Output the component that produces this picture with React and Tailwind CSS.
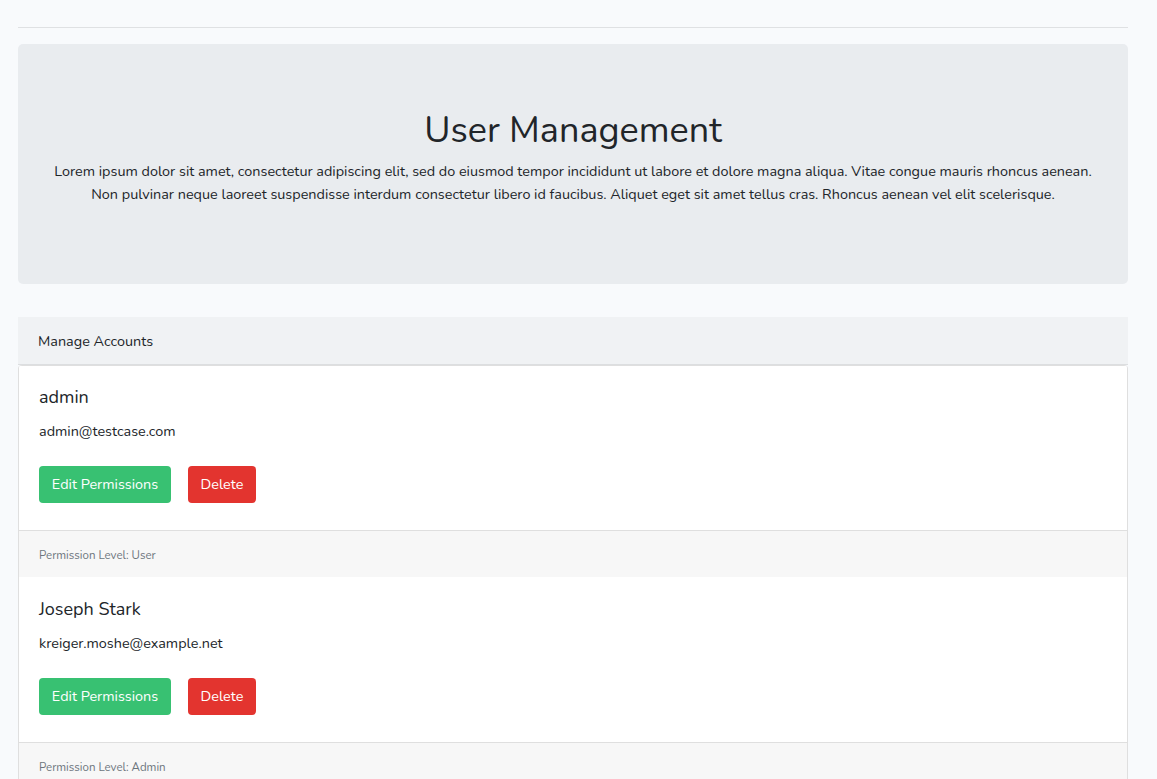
const users = [
  { name: "admin", email: "admin@testcase.com", level: "User" },
  { name: "Joseph Stark", email: "kreiger.moshe@example.net", level: "Admin" },
];

function UserCard({ user, first }) {
  return (
    <div className={first ? "border-t border-[#dfdfdf]" : "border-t border-white"}>
      <div className="bg-white pt-[20px] pb-[27px] px-[20px] h-[164px]">
        <h5 className="text-[18px] leading-[22px] font-normal text-[#212529]">{user.name}</h5>
        <p className="mt-[12px] text-[14.4px] leading-[23px] text-[#212529]">{user.email}</p>
        <div className="mt-[23px] flex gap-[17px]">
          <button className="h-[37px] w-[132px] rounded-[4px] bg-[#38c172] text-white text-[14.4px] leading-[23px]">
            Edit Permissions
          </button>
          <button className="h-[37px] w-[68px] rounded-[4px] bg-[#e3342f] text-white text-[14.4px] leading-[23px]">
            Delete
          </button>
        </div>
      </div>
      <div className="border-t border-[#dfdfdf] bg-[#f7f7f7] px-[20px] pt-[13px] pb-[11px]">
        <small className="block text-[11.5px] leading-[22px] text-[#6c757d]">
          Permission Level: {user.level}
        </small>
      </div>
    </div>
  );
}

export default function App() {
  return (
    <div className="min-h-[779px] bg-[#f8fafc] font-['Nunito','Lato',sans-serif] text-[#212529] pt-[27px] pl-[18px]">
      <div className="w-[1110px]">
        <hr className="border-0 border-t border-[#dfe1e3]" />

        <div className="mt-[16px] rounded-[5px] bg-[#e9ecef] px-[32px] py-[64px] text-center">
          <h1 className="text-[36px] leading-[46px] font-normal text-[#212529]">User Management</h1>
          <p className="mt-[6px] mb-[14px] text-[14.4px] leading-[23px]">
            Lorem ipsum dolor sit amet, consectetur adipiscing elit, sed do eiusmod tempor incididunt ut labore et dolore magna aliqua. Vitae congue mauris rhoncus aenean.
            <br />
            Non pulvinar neque laoreet suspendisse interdum consectetur libero id faucibus. Aliquet eget sit amet tellus cras. Rhoncus aenean vel elit scelerisque.
          </p>
        </div>

        <div className="mt-[33px]">
          <div className="bg-[#f0f2f4] border-b border-[#dcdee0] px-[20px] pt-[13px] pb-[11px]">
            <span className="text-[14.4px] leading-[23px] block">Manage Accounts</span>
          </div>
          <div className="border-x border-[#dfdfdf] rounded-t-[4px] overflow-hidden">
            {users.map((u, i) => (
              <UserCard key={u.email} user={u} first={i === 0} />
            ))}
          </div>
        </div>
      </div>
    </div>
  );
}
